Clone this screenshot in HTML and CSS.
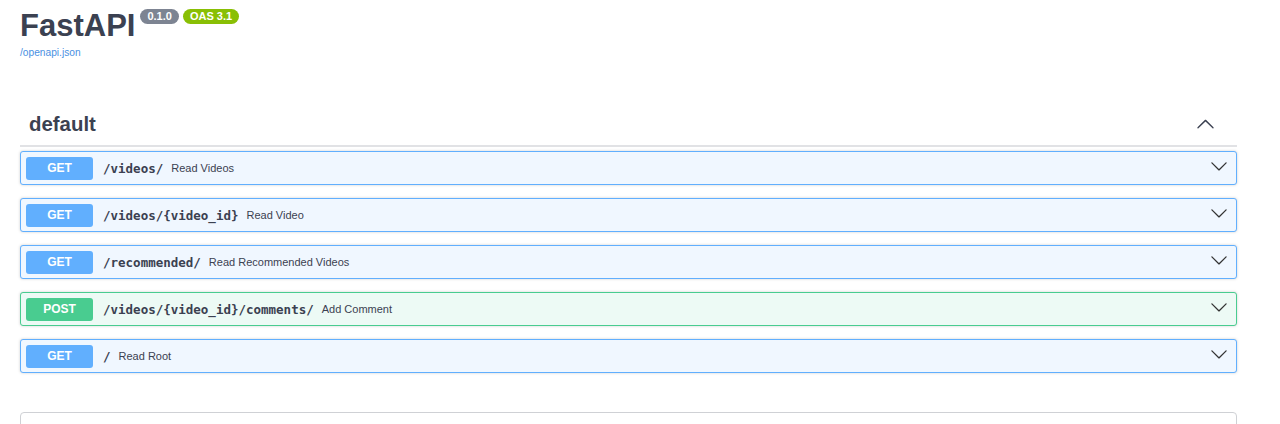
FILE: index.html
```html
<!DOCTYPE html>
<html lang="en">
<head>
<meta charset="utf-8">
<title>FastAPI - Swagger UI</title>
<link rel="stylesheet" href="styles.css">
</head>
<body>
<div class="wrapper">
  <div class="info">
    <div class="title-row">
      <h2 class="title">FastAPI</h2>
      <span class="pill pill-version">0.1.0</span>
      <span class="pill pill-oas">OAS 3.1</span>
    </div>
    <a class="link" href="#">/openapi.json</a>
  </div>

  <div class="tag">
    <h3 class="tag-name">default</h3>
    <svg class="tag-arrow" width="19" height="19" viewBox="0 0 20 20"><path transform="rotate(180 10 10)" d="M17.418 6.109c.272-.268.709-.268.979 0s.271.701 0 .969l-7.908 7.83c-.27.268-.707.268-.979 0l-7.908-7.83c-.27-.268-.27-.701 0-.969.271-.268.709-.268.979 0L10 13.25l7.418-7.141z"/></svg>
  </div>

  <div class="ops">
    <div class="opblock get">
      <span class="method">GET</span>
      <span class="path">/videos/</span>
      <span class="desc">Read Videos</span>
      <svg class="op-arrow" width="18" height="18" viewBox="0 0 20 20"><path d="M17.418 6.109c.272-.268.709-.268.979 0s.271.701 0 .969l-7.908 7.83c-.27.268-.707.268-.979 0l-7.908-7.83c-.27-.268-.27-.701 0-.969.271-.268.709-.268.979 0L10 13.25l7.418-7.141z"/></svg>
    </div>
    <div class="opblock get">
      <span class="method">GET</span>
      <span class="path">/videos/{video_id}</span>
      <span class="desc">Read Video</span>
      <svg class="op-arrow" width="18" height="18" viewBox="0 0 20 20"><path d="M17.418 6.109c.272-.268.709-.268.979 0s.271.701 0 .969l-7.908 7.83c-.27.268-.707.268-.979 0l-7.908-7.83c-.27-.268-.27-.701 0-.969.271-.268.709-.268.979 0L10 13.25l7.418-7.141z"/></svg>
    </div>
    <div class="opblock get">
      <span class="method">GET</span>
      <span class="path">/recommended/</span>
      <span class="desc">Read Recommended Videos</span>
      <svg class="op-arrow" width="18" height="18" viewBox="0 0 20 20"><path d="M17.418 6.109c.272-.268.709-.268.979 0s.271.701 0 .969l-7.908 7.83c-.27.268-.707.268-.979 0l-7.908-7.83c-.27-.268-.27-.701 0-.969.271-.268.709-.268.979 0L10 13.25l7.418-7.141z"/></svg>
    </div>
    <div class="opblock post">
      <span class="method">POST</span>
      <span class="path">/videos/{video_id}/comments/</span>
      <span class="desc">Add Comment</span>
      <svg class="op-arrow" width="18" height="18" viewBox="0 0 20 20"><path d="M17.418 6.109c.272-.268.709-.268.979 0s.271.701 0 .969l-7.908 7.83c-.27.268-.707.268-.979 0l-7.908-7.83c-.27-.268-.27-.701 0-.969.271-.268.709-.268.979 0L10 13.25l7.418-7.141z"/></svg>
    </div>
    <div class="opblock get">
      <span class="method">GET</span>
      <span class="path">/</span>
      <span class="desc">Read Root</span>
      <svg class="op-arrow" width="18" height="18" viewBox="0 0 20 20"><path d="M17.418 6.109c.272-.268.709-.268.979 0s.271.701 0 .969l-7.908 7.83c-.27.268-.707.268-.979 0l-7.908-7.83c-.27-.268-.27-.701 0-.969.271-.268.709-.268.979 0L10 13.25l7.418-7.141z"/></svg>
    </div>
  </div>

  <section class="models"></section>
</div>
</body>
</html>
```

FILE: styles.css
```css
html, body {
  margin: 0;
  padding: 0;
  background: #fff;
}

body {
  font-family: "Liberation Sans", Arial, sans-serif;
  color: #3b4151;
  overflow: hidden;
}

.wrapper {
  width: 1217px;
  margin-left: 20px;
}

.info {
  padding-top: 8px;
  margin-bottom: 53px;
}

.title-row {
  display: flex;
  align-items: flex-start;
}

.title {
  margin: 0;
  font-size: 31px;
  line-height: 35px;
  font-weight: bold;
  color: #3b4151;
}

.pill {
  display: inline-block;
  margin-top: 1px;
  height: 15px;
  line-height: 15px;
  padding: 0 7px;
  border-radius: 57px;
  font-size: 11px;
  font-weight: bold;
  color: #fff;
}

.pill-version {
  background: #7d8492;
  margin-left: 5px;
}

.pill-oas {
  background: #89bf04;
  margin-left: 4px;
}

.link {
  display: block;
  margin-top: 4px;
  font-size: 10.2px;
  line-height: 12px;
  color: #4990e2;
  text-decoration: none;
}

.tag {
  display: flex;
  align-items: center;
  padding: 0 22px 9px 9px;
  border-bottom: 2px solid #e1e2e5;
}

.tag-name {
  flex: 1;
  margin: 0;
  font-size: 20.4px;
  line-height: 24px;
  font-weight: bold;
  color: #3b4151;
}

.tag-arrow {
  fill: #3b4151;
}

.ops {
  padding-top: 4px;
  padding-bottom: 13px;
}

.opblock {
  display: flex;
  align-items: center;
  height: 34px;
  box-sizing: border-box;
  padding: 0 8px 0 5px;
  margin-bottom: 13px;
  border: 1px solid #61affe;
  border-radius: 3px;
  background: #f0f7ff;
  box-shadow: 0 0 3px rgba(0, 0, 0, 0.19);
}

.opblock:last-child {
  margin-bottom: 0;
}

.opblock.post {
  border-color: #49cc90;
  background: #edfaf5;
}

.method {
  width: 67px;
  height: 23px;
  line-height: 23px;
  text-align: center;
  border-radius: 3px;
  background: #61affe;
  color: #fff;
  font-size: 12px;
  font-weight: bold;
}

.post .method {
  background: #49cc90;
}

.path {
  padding: 0 8px 0 10px;
  font-family: "DejaVu Sans Mono", "Liberation Mono", monospace;
  font-size: 12.5px;
  font-weight: bold;
  color: #3b4151;
}

.desc {
  flex: 1;
  font-size: 11px;
  color: #3b4151;
}

.op-arrow {
  fill: #333;
  margin-bottom: 5px;
}

.models {
  margin-top: 26px;
  height: 40px;
  border: 1px solid #cfd1d5;
  border-radius: 4px;
}
```
